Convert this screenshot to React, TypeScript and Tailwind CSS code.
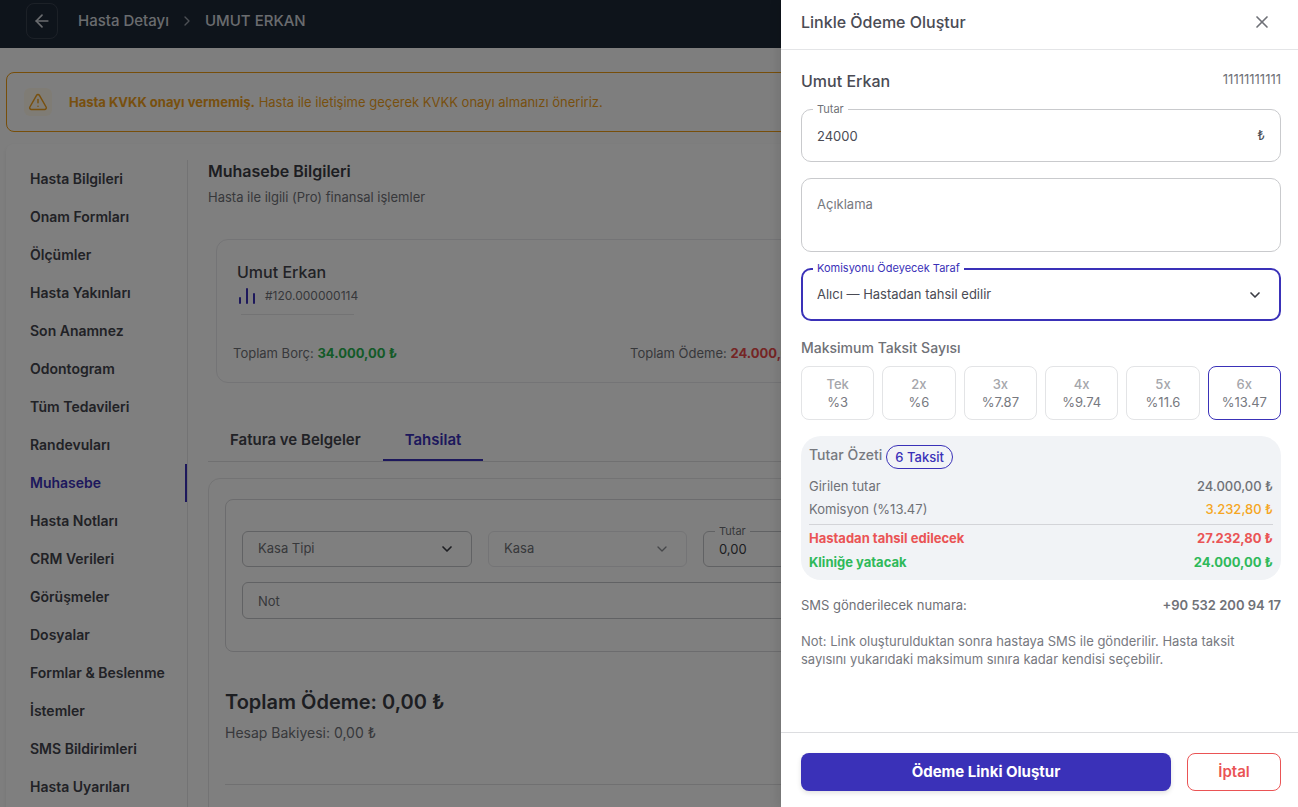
import { useState, type ReactNode } from "react";
import { ArrowLeft, ChevronDown, ChevronRight, TriangleAlert, X } from "lucide-react";

const menu = [
  "Hasta Bilgileri",
  "Onam Formları",
  "Ölçümler",
  "Hasta Yakınları",
  "Son Anamnez",
  "Odontogram",
  "Tüm Tedavileri",
  "Randevuları",
  "Muhasebe",
  "Hasta Notları",
  "CRM Verileri",
  "Görüşmeler",
  "Dosyalar",
  "Formlar & Beslenme",
  "İstemler",
  "SMS Bildirimleri",
  "Hasta Uyarıları",
];

const installments = [
  { label: "Tek", rate: "%3" },
  { label: "2x", rate: "%6" },
  { label: "3x", rate: "%7.87" },
  { label: "4x", rate: "%9.74" },
  { label: "5x", rate: "%11.6" },
  { label: "6x", rate: "%13.47" },
];

function FloatingLabel({ htmlFor, active, children }: { htmlFor: string; active?: boolean; children: ReactNode }) {
  return (
    <label
      htmlFor={htmlFor}
      className={
        "absolute -top-2 left-3 bg-white px-1 text-[11px] leading-4 " +
        (active ? "text-[#3a31b8]" : "text-[#6f7177]")
      }
    >
      {children}
    </label>
  );
}

function TopBar() {
  return (
    <header className="flex h-12 items-start bg-[#1d2837] px-[26px] pt-[3px] text-[#d4d8de]">
      <button
        type="button"
        aria-label="Geri"
        className="flex h-9 w-8 items-center justify-center rounded-lg border border-[#38424f]"
      >
        <ArrowLeft size={20} />
      </button>
      <nav className="ml-5 flex h-9 items-center gap-2.5 text-[15px] font-medium">
        <a href="#detay">Hasta Detayı</a>
        <ChevronRight size={16} className="text-[#9aa1ab]" />
        <span>UMUT ERKAN</span>
      </nav>
    </header>
  );
}

function ConsentAlert() {
  return (
    <div className="flex h-[60px] items-center rounded-lg border border-[#ef9c14] px-[17px] text-[13px] text-[#f0a01c]">
      <span className="flex size-7 items-center justify-center rounded-md bg-[#fff8ea]">
        <TriangleAlert size={20} strokeWidth={1.75} />
      </span>
      <p className="ml-[17px] pt-px">
        <strong className="font-bold">Hasta KVKK onayı vermemiş.</strong> Hasta ile iletişime geçerek KVKK onayı almanızı
        öneririz.
      </p>
    </div>
  );
}

function SideMenu() {
  return (
    <nav className="w-[182px] shrink-0 border-r border-[#e6e6e8]">
      {menu.map((item) => (
        <a
          key={item}
          href={"#" + item}
          className={
            "flex h-[38px] items-center border-r-2 pl-6 text-sm font-semibold " +
            (item === "Muhasebe" ? "border-[#3a31b8] text-[#3a31b8]" : "border-transparent text-[#43444c]")
          }
        >
          {item}
        </a>
      ))}
    </nav>
  );
}

function AccountCard() {
  return (
    <section className="mx-2 mt-8 h-36 rounded-xl border border-[#e9e9ec] px-4 pt-5">
      <div className="px-1">
        <h2 className="text-base font-medium leading-6 text-[#43444c]">Umut Erkan</h2>
        <div className="flex h-6 w-fit items-center gap-2 text-xs text-[#6f7177]">
          <svg width="20" height="18" viewBox="0 0 20 18" fill="none" stroke="#3a31b8" strokeWidth="2" strokeLinecap="round">
            <path d="M3 11v5M10 2v14M17 7v9" />
          </svg>
          #120.000000114
        </div>
        <hr className="ml-1 mt-1.5 w-[113px] border-[#e6e6e8]" />
      </div>
      <div className="mt-7 grid grid-cols-[397px_1fr] text-[13px] leading-5 text-[#6f7177]">
        <p>
          Toplam Borç: <strong className="font-bold text-[#28b551]">34.000,00 ₺</strong>
        </p>
        <p>
          Toplam Ödeme: <strong className="font-bold text-[#ea4a4a]">24.000,00 ₺</strong>
        </p>
      </div>
    </section>
  );
}

function CollectionForm() {
  return (
    <form className="rounded-lg border border-[#d9d9dc] px-4 pb-8 pt-[31px] text-[13px]">
      <div className="flex gap-4">
        <div className="relative w-[230px]">
          <select
            aria-label="Kasa Tipi"
            className="h-9 w-full appearance-none rounded-md border border-[#c3c4c8] pl-[15px] text-[#6f7177]"
          >
            <option>Kasa Tipi</option>
          </select>
          <ChevronDown size={16} className="pointer-events-none absolute right-[17px] top-2.5 text-[#3b3c44]" strokeWidth={2.5} />
        </div>
        <div className="relative w-[199px]">
          <select
            aria-label="Kasa"
            disabled
            className="h-9 w-full appearance-none rounded-md border border-[#e9e9ec] pl-[15px] text-[#6f7177]"
          >
            <option>Kasa</option>
          </select>
          <ChevronDown size={16} className="pointer-events-none absolute right-[17px] top-2.5 text-[#8d8e94]" />
        </div>
        <div className="relative flex-1">
          <FloatingLabel htmlFor="tahsilat-tutar">Tutar</FloatingLabel>
          <input
            id="tahsilat-tutar"
            defaultValue="0,00"
            className="h-9 w-full rounded-md border border-[#c3c4c8] px-[15px] text-[#3b3c44]"
          />
        </div>
      </div>
      <input
        aria-label="Not"
        placeholder="Not"
        className="mt-[15px] h-[37px] w-full rounded-md border border-[#c3c4c8] px-[15px] placeholder:text-[#6f7177]"
      />
    </form>
  );
}

function AccountingPage() {
  return (
    <main className="min-w-0 flex-1 px-5">
      <h1 className="text-base font-semibold leading-[22px] text-[#3b3c44]">Muhasebe Bilgileri</h1>
      <p className="mt-[5px] text-[13px] leading-5 text-[#6f7177]">Hasta ile ilgili (Pro) finansal işlemler</p>
      <AccountCard />
      <div role="tablist" className="mt-[39px] flex h-10 border-b border-[#e0e0e3] text-[15px] font-semibold">
        <button type="button" role="tab" aria-selected="false" className="border-b-2 border-transparent px-[22px] text-[#43444c]">
          Fatura ve Belgeler
        </button>
        <button
          type="button"
          role="tab"
          aria-selected="true"
          className="border-b-2 border-[#3a31b8] px-[22px] text-[#3a31b8]"
        >
          Tahsilat
        </button>
      </div>
      <section className="mt-4 rounded-xl border border-[#e6e6e8] px-4 pb-16 pt-5">
        <CollectionForm />
        <h2 className="mt-9 text-xl font-semibold leading-7 text-[#3b3c44]">Toplam Ödeme: 0,00 ₺</h2>
        <p className="mt-[7px] text-sm leading-5 text-[#6f7177]">Hesap Bakiyesi: 0,00 ₺</p>
        <hr className="mt-[41px] border-[#e0e0e3]" />
      </section>
    </main>
  );
}

function InstallmentPicker({ value, onChange }: { value: string; onChange: (label: string) => void }) {
  return (
    <>
      <h3 className="mt-4 text-sm font-medium leading-[22px] text-[#6f7177]">Maksimum Taksit Sayısı</h3>
      <div className="mt-[7px] grid grid-cols-6 gap-2">
        {installments.map(({ label, rate }) => (
          <button
            key={label}
            type="button"
            aria-pressed={label === value}
            onClick={() => onChange(label)}
            className={
              "flex h-[54px] flex-col items-center justify-center rounded-lg border text-[13px] leading-[18px] " +
              (label === value ? "border-[#3a31b8]" : "border-[#e3e4e6]")
            }
          >
            <span className="font-medium text-[#a5a6ab]">{label}</span>
            <span className="text-[#77797f]">{rate}</span>
          </button>
        ))}
      </div>
    </>
  );
}

function Summary() {
  return (
    <section className="mt-4 rounded-[20px] bg-[#f1f3f6] px-2 pb-1.5 pt-2 text-[13px]">
      <div className="flex gap-1">
        <h3 className="text-sm font-medium leading-[22px] text-[#77797f]">Tutar Özeti</h3>
        <span className="mt-px rounded-full border border-[#3a31b8] px-2 text-[13px] font-medium leading-[22px] text-[#3a31b8]">
          6 Taksit
        </span>
      </div>
      <dl className="mt-1.5 grid grid-cols-[1fr_auto] leading-[23px] text-[#6f7177]">
        <dt>Girilen tutar</dt>
        <dd className="text-right font-medium">24.000,00 ₺</dd>
        <dt>Komisyon (%13.47)</dt>
        <dd className="text-right font-medium text-[#f5a623]">3.232,80 ₺</dd>
      </dl>
      <dl className="mt-[3px] grid grid-cols-[1fr_auto] border-t border-[#d3d4d8] pt-px font-bold leading-6">
        <dt className="text-[#ea5455]">Hastadan tahsil edilecek</dt>
        <dd className="text-right text-[#ea5455]">27.232,80 ₺</dd>
        <dt className="text-[#2fb95a]">Kliniğe yatacak</dt>
        <dd className="text-right text-[#2fb95a]">24.000,00 ₺</dd>
      </dl>
    </section>
  );
}

function PaymentDrawer() {
  const [selected, setSelected] = useState("6x");
  return (
    <aside
      role="dialog"
      aria-label="Linkle Ödeme Oluştur"
      className="absolute inset-y-0 right-0 flex w-[517px] max-w-full flex-col bg-white shadow-[-4px_0_8px_rgba(0,0,0,0.08)]"
    >
      <header className="flex h-[50px] items-center justify-between border-b border-[#e4e5e7] pb-[5px] pl-5 pr-6">
        <h2 className="text-base font-medium text-[#4a4b54]">Linkle Ödeme Oluştur</h2>
        <button type="button" aria-label="Kapat" className="flex size-6 items-center justify-center text-[#6f7177]">
          <X size={20} />
        </button>
      </header>
      <div className="flex-1 overflow-y-auto pl-5 pr-[17px] pt-5">
        <div className="flex justify-between">
          <h3 className="text-base font-medium leading-[22px] text-[#4a4b54]">Umut Erkan</h3>
          <span className="text-[13px] leading-[18px] text-[#6f7177]">11111111111</span>
        </div>
        <div className="relative mt-[17px]">
          <FloatingLabel htmlFor="tutar">Tutar</FloatingLabel>
          <input
            id="tutar"
            defaultValue="24000"
            className="block h-[53px] w-full rounded-[10px] border border-[#c9cacd] px-[15px] text-[13px] text-[#4a4b54]"
          />
          <span className="absolute right-4 top-4 text-[13px] leading-5 text-[#4a4b54]">₺</span>
        </div>
        <textarea
          aria-label="Açıklama"
          placeholder="Açıklama"
          className="mt-4 block h-[74px] w-full resize-none rounded-[10px] border border-[#c9cacd] px-[15px] py-[15px] text-[13px] leading-5 placeholder:text-[#77797f]"
        />
        <div className="relative mt-4">
          <FloatingLabel htmlFor="taraf" active>
            Komisyonu Ödeyecek Taraf
          </FloatingLabel>
          <select
            id="taraf"
            className="block h-[53px] w-full appearance-none rounded-[10px] border-2 border-[#3a31b8] bg-white px-3.5 text-[13px] text-[#4a4b54]"
          >
            <option>Alıcı — Hastadan tahsil edilir</option>
          </select>
          <ChevronDown size={16} strokeWidth={2.5} className="pointer-events-none absolute right-[18px] top-[19px] text-[#3b3c44]" />
        </div>
        <InstallmentPicker value={selected} onChange={setSelected} />
        <Summary />
        <div className="mt-[15px] flex justify-between text-[13px] leading-5 text-[#6f7177]">
          <span>SMS gönderilecek numara:</span>
          <span className="font-semibold">+90 532 200 94 17</span>
        </div>
        <p className="mt-[17px] text-[13px] leading-[18px] text-[#77797f]">
          Not: Link oluşturulduktan sonra hastaya SMS ile gönderilir. Hasta taksit sayısını yukarıdaki maksimum sınıra
          kadar kendisi seçebilir.
        </p>
      </div>
      <footer className="flex gap-4 border-t border-[#dcdde0] pb-4 pl-5 pr-[17px] pt-5">
        <button
          type="button"
          className="h-[38px] flex-1 rounded-lg bg-[#3a31b8] text-[15px] font-bold text-white shadow-[0_2px_5px_rgba(0,0,0,0.12)]"
        >
          Ödeme Linki Oluştur
        </button>
        <button
          type="button"
          className="h-[38px] w-[94px] rounded-lg border border-[#ea5455] text-[15px] font-semibold text-[#ea5455]"
        >
          İptal
        </button>
      </footer>
    </aside>
  );
}

export default function App() {
  return (
    <div className="relative h-screen overflow-hidden bg-white font-['Inter',sans-serif]">
      <TopBar />
      <div className="bg-[#fdfdfd] px-1.5 pt-6">
        <ConsentAlert />
        <div className="mt-3 flex rounded-lg bg-white pt-4 shadow-[0_2px_5px_rgba(0,0,0,0.08)]">
          <SideMenu />
          <AccountingPage />
        </div>
      </div>
      <div className="absolute inset-0 bg-black/50" />
      <PaymentDrawer />
    </div>
  );
}
